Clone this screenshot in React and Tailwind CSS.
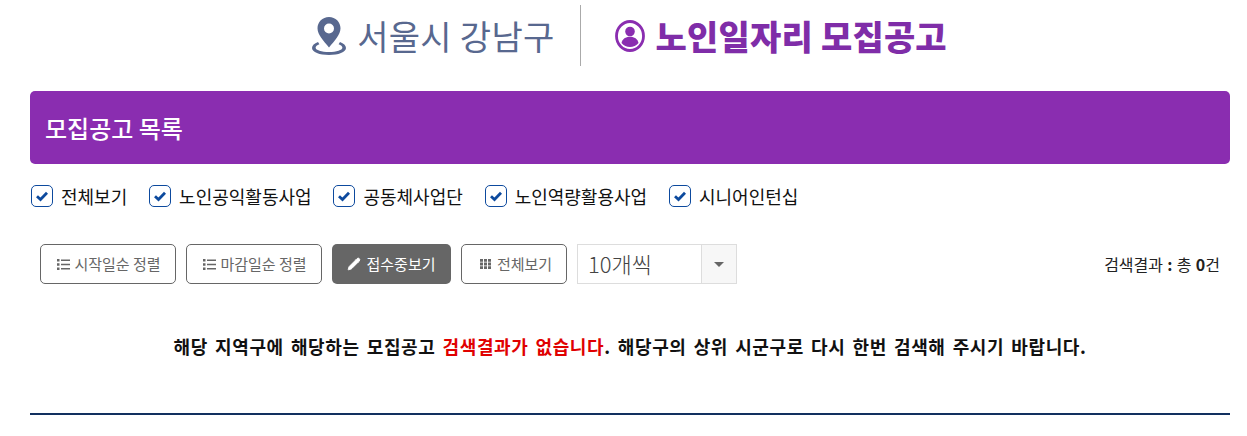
import { Pencil } from 'lucide-react'

const categories = ['전체보기', '노인공익활동사업', '공동체사업단', '노인역량활용사업', '시니어인턴십']

function PinIcon() {
  return (
    <svg className="w-[36px] h-[38px]" viewBox="0 0 36 38" fill="#58688f">
      <path fillRule="evenodd" d="M18 0C11.400 0 6.500 5 6.500 11.300c0 3.500 1.700 6.500 3.700 9.500 2.300 3.300 5.200 6.600 7.800 9.700 2.600-3.100 5.500-6.400 7.800-9.700 2-3 3.700-6 3.700-9.500C29.500 5 24.600 0 18 0zm0 6.500a5 5 0 110 10 5 5 0 010-10z" />
      <path d="M7 25C3.300 26.400 1 28.500 1 31c0 4.200 7.600 7 17 7s17-2.800 17-7c0-2.500-2.300-4.600-6-6l-1.400 2.300c2.400.9 3.800 2.200 3.800 3.500 0 2.300-5.900 4.300-13.400 4.300S4.600 33.100 4.600 30.800c0-1.300 1.400-2.600 3.800-3.500z" />
    </svg>
  )
}

function PersonCircleIcon() {
  return (
    <svg className="w-[30px] h-[32px]" viewBox="0 0 30 32">
      <ellipse cx="15" cy="16" rx="13.500" ry="14.500" fill="none" stroke="#8a2db0" strokeWidth="2.800" />
      <circle cx="15" cy="11.500" r="4.800" fill="#8a2db0" />
      <path d="M6.500 23c1-4 4-6.200 8.500-6.200s7.500 2.200 8.500 6.200c-2.200 2.400-5.200 4-8.500 4s-6.300-1.600-8.500-4z" fill="#8a2db0" />
    </svg>
  )
}

function CheckBox({ label }) {
  return (
    <label className="flex items-center gap-[8px]">
      <span className="w-[22px] h-[22px] rounded-[5px] border border-[#0d4a9e] flex items-center justify-center bg-white">
        <svg className="w-[14px] h-[14px]" viewBox="0 0 14 14" fill="none" stroke="#0d4a9e" strokeWidth="2.800">
          <path d="M2 7.200l3.500 3.300L12 3.800" />
        </svg>
      </span>
      <span className="text-[18px] leading-[24px] text-[#111]">{label}</span>
    </label>
  )
}

function ListIcon() {
  return (
    <svg className="w-[13px] h-[11px]" viewBox="0 0 13 11" fill="#666">
      <path d="M0 0h2.500v2.500H0zM0 4.200h2.500v2.500H0zM0 8.400h2.500v2.500H0zM4 .5h9v1.500H4zM4 4.700h9v1.500H4zM4 8.900h9v1.500H4z" />
    </svg>
  )
}

function GridIcon() {
  return (
    <svg className="w-[11px] h-[10px]" viewBox="0 0 11 10" fill="#666">
      <path d="M0 0h3v2.800H0zM4 0h3v2.800H4zM8 0h3v2.800H8zM0 3.600h3v2.800H0zM4 3.600h3v2.800H4zM8 3.600h3v2.800H8zM0 7.200h3V10H0zM4 7.200h3V10H4zM8 7.200h3V10H8z" />
    </svg>
  )
}

function OutlineButton({ icon, label, className }) {
  return (
    <button className={`h-[40px] ${className} rounded-[5px] border border-[#666] bg-white flex items-center justify-center text-[15px] text-[#666]`}>
      {icon}
      {label}
    </button>
  )
}

export default function App() {
  return (
    <div className="w-[1247px] h-[436px] bg-white overflow-hidden font-['Noto_Sans_CJK_KR',sans-serif]">
      <div className="h-[91px] pt-[5px] flex justify-center pl-[11px]">
        <div className="h-[61px] flex items-center">
          <div className="flex items-center gap-[10px] pr-[25px] border-r border-[#aaa] h-full">
            <PinIcon />
            <span className="text-[34px] tracking-[0.3px] text-[#58688f]">서울시 강남구</span>
          </div>
          <div className="flex items-center gap-[11px] pl-[34px] h-full">
            <PersonCircleIcon />
            <span className="text-[34px] font-black tracking-[0.2px] text-[#7f2da8]">노인일자리 모집공고</span>
          </div>
        </div>
      </div>

      <div className="mx-[30px] w-[1200px]">
        <div className="h-[73px] rounded-[5px] bg-[#8a2db0] flex items-center px-[15px] text-[24px] font-medium text-white">
          모집공고 목록
        </div>

        <div className="mt-[20px] pl-[1px] flex gap-[21.85px]">
          {categories.map(c => <CheckBox key={c} label={c} />)}
        </div>

        <div className="mt-[36px] pl-[10px] flex items-center">
          <div className="flex gap-[10px]">
            <OutlineButton icon={<ListIcon />} label="시작일순 정렬" className="w-[136px] gap-[4px] pl-[2px]" />
            <OutlineButton icon={<ListIcon />} label="마감일순 정렬" className="w-[136px] gap-[4px] pl-[2px]" />
            <button className="h-[40px] w-[119px] rounded-[5px] bg-[#666] flex items-center justify-center gap-[5px] text-[15px] text-white">
              <Pencil size={14} fill="white" strokeWidth={1.500} />
              접수중보기
            </button>
            <OutlineButton icon={<GridIcon />} label="전체보기" className="w-[106px] gap-[6px] pl-[4px]" />
            <div className="h-[40px] w-[160px] border border-[#ddd] flex">
              <span className="flex-1 pl-[10px] text-[22px] font-light leading-[36px] text-[#444]">10개씩</span>
              <span className="w-[35px] bg-[#f7f7f7] border-l border-[#ddd] flex items-center justify-center">
                <span className="w-0 h-0 border-x-[5px] border-x-transparent border-t-[5px] border-t-[#666]" />
              </span>
            </div>
          </div>
          <div className="ml-auto pr-[10px] text-[16px] text-[#222] [word-spacing:0.7px]">
            검색결과 <span className="font-bold">:</span> 총 <span className="font-bold">0</span>건
          </div>
        </div>

        <p className="mt-[48px] text-center text-[18px] leading-[28px] font-bold text-[#111] tracking-[0.6px] [word-spacing:2.5px]">
          해당 지역구에 해당하는 모집공고 <span className="text-[#e00000]">검색결과가 없습니다</span>. 해당구의 상위 시군구로 다시 한번 검색해 주시기 바랍니다.
        </p>

        <div className="mt-[53px] h-[2px] bg-[#12305f]" />
      </div>
    </div>
  )
}
